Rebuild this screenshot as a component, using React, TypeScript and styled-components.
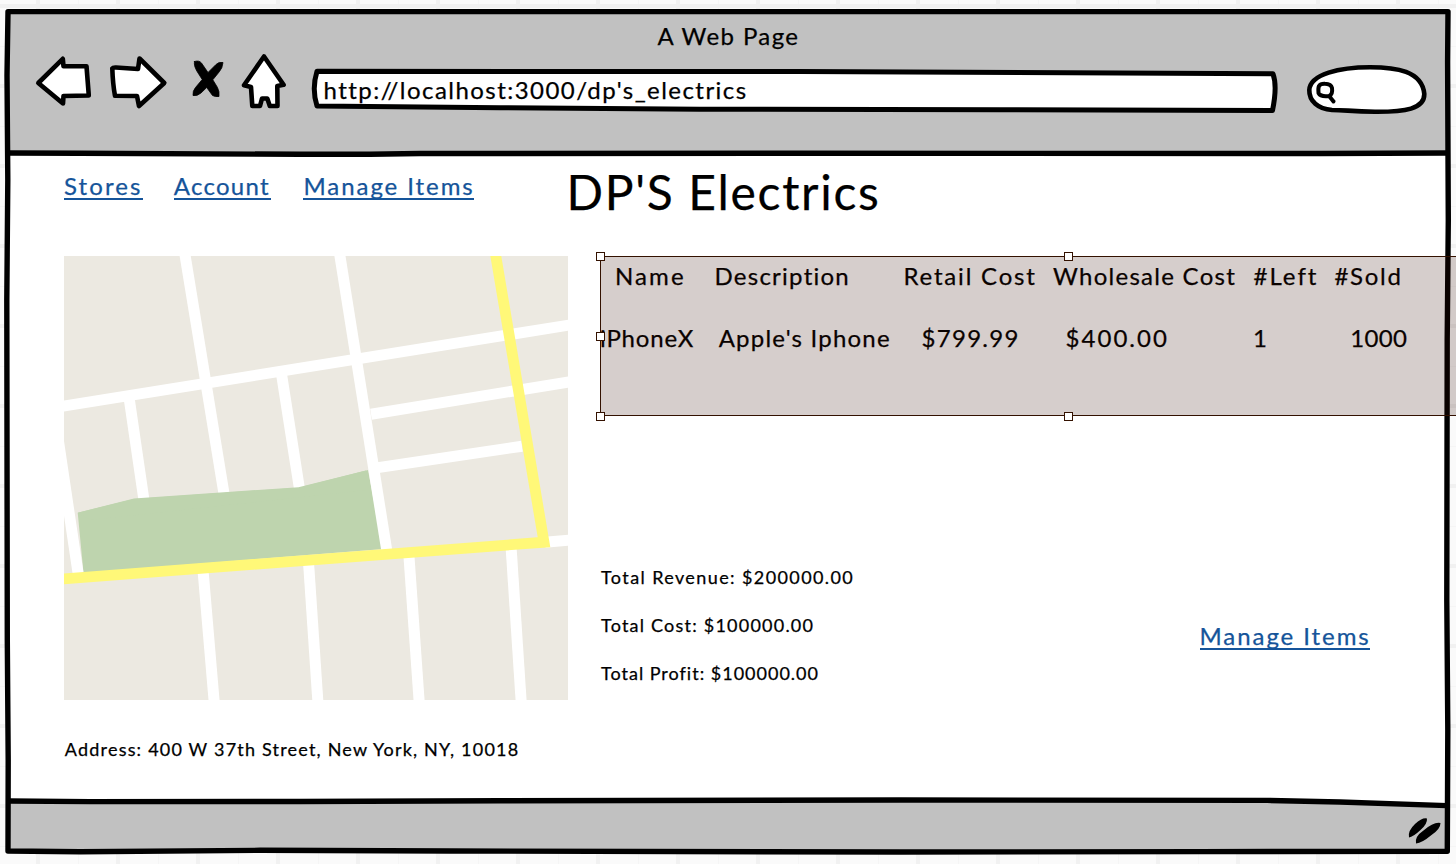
import React from "react";
import styled, { createGlobalStyle } from "styled-components";

const GlobalStyle = createGlobalStyle`
  html, body { margin: 0; overflow: hidden; }
  body {
    font-family: Lato, "Open Sans", sans-serif;
    font-variant-ligatures: none;
    -webkit-text-stroke: 0.25px currentColor;
    color: #000;
  }
`;

const Canvas = styled.div`
  position: relative;
  box-sizing: border-box;
  width: 1456px;
  height: 864px;
  padding: 12px 8px 13px;
  overflow: hidden;
  background-color: #fafafa;
  background-image:
    linear-gradient(#f1f1f1 4px, transparent 4px),
    linear-gradient(90deg, #f1f1f1 4px, transparent 4px),
    linear-gradient(#f5f5f5 1px, transparent 1px),
    linear-gradient(90deg, #f5f5f5 1px, transparent 1px);
  background-size: 80px 80px;
  background-position: 0 4px, 36px 0, 0 46px, 78px 0;
`;

const BrowserWindow = styled.div`
  display: flex;
  flex-direction: column;
  height: 839px;
`;

const Header = styled.header`
  height: 142px;
  background: #c1c1c1;
`;

const Label = styled.span<{ $track?: number; $size?: number }>`
  display: block;
  font-size: ${(p) => p.$size ?? 24}px;
  line-height: ${(p) => (p.$size === 18 ? 24 : p.$size === 48 ? 58 : 30)}px;
  letter-spacing: ${(p) => p.$track ?? 1.4}px;
  white-space: nowrap;
`;

const WindowTitle = styled.div`
  box-sizing: border-box;
  height: 40px;
  padding: 9px 0 0 649.5px;
`;

const Toolbar = styled.div`
  display: flex;
  padding-left: 24px;
`;

const Icon = styled.svg<{ $gap?: number }>`
  display: block;
  flex: none;
  height: 66px;
  margin-right: ${(p) => p.$gap ?? 0}px;
  fill: #fff;
  stroke: #000;
  stroke-width: 4.6;
  stroke-linejoin: round;
  stroke-linecap: round;
`;

const AddressBar = styled.div`
  position: relative;
  width: 972px;
  height: 66px;
  margin-right: 24px;
`;

const BarOutline = styled(Icon)`
  position: absolute;
  inset: 0;
  stroke-width: 5;
`;

const Url = styled.div`
  position: relative;
  padding: 23px 0 0 15.5px;
`;

const Body = styled.main`
  flex: 1;
  min-height: 0;
  background: #fff;
`;

const TopRow = styled.div`
  display: flex;
  height: 102px;
  padding-left: 56px;
`;

const Nav = styled.nav`
  display: flex;
  width: 502.5px;
  padding-top: 16px;
`;

const Link = styled.a<{ $width: number; $track: number; $gap?: number }>`
  box-sizing: border-box;
  flex: none;
  width: ${(p) => p.$width}px;
  height: 30px;
  margin-right: ${(p) => p.$gap ?? 0}px;
  border-bottom: 2px solid #15549a;
  color: #15549a;
  font-size: 24px;
  line-height: 32px;
  letter-spacing: ${(p) => p.$track}px;
  white-space: nowrap;
`;

const Title = styled.h1`
  margin: 9px 0 0;
  font-weight: 400;
`;

const Columns = styled.div`
  display: flex;
  gap: 32px;
  padding-left: 56px;
`;

const StoreColumn = styled.section`
  flex: none;
  width: 504px;
`;

const StoreMap = styled.svg`
  display: block;
  width: 504px;
  height: 444px;
  background: #ece9e1;
`;

const Address = styled.div`
  padding: 37px 0 0 0.8px;
`;

const DetailColumn = styled.section`
  flex: none;
  width: 937px;
`;

const ItemTable = styled.div`
  position: relative;
  height: 160px;
`;

const TableRow = styled.div<{ $top: number; $indent: number }>`
  display: flex;
  padding: ${(p) => p.$top}px 0 0 ${(p) => p.$indent}px;
`;

const Cell = styled(Label)<{ $width: number }>`
  flex: none;
  width: ${(p) => p.$width}px;
`;

const Selection = styled.div`
  position: absolute;
  z-index: 2;
  inset: 0;
  box-sizing: border-box;
  border: 1px solid #331100;
  background: rgba(50, 8, 2, 0.2);
`;

const Handle = styled.i<{ $x: string; $y: string }>`
  position: absolute;
  left: ${(p) => p.$x};
  top: ${(p) => p.$y};
  box-sizing: border-box;
  width: 9px;
  height: 9px;
  margin: -5px 0 0 -5px;
  border: 1px solid #331100;
  background: #fff;
`;

const Summary = styled.div`
  display: flex;
  padding: 149px 0 0 1px;
`;

const Totals = styled.div`
  display: flex;
  flex-direction: column;
  gap: 24px;
  width: 598.5px;
`;

const ManageLink = styled.div`
  display: flex;
  padding-top: 55px;
`;

const Footer = styled.footer`
  height: 50px;
  background: #c1c1c1;
`;

const Frame = styled.svg`
  position: absolute;
  z-index: 1;
  inset: 0;
  pointer-events: none;
`;

const headings: [string, number, number][] = [
  ["Name", 99.5, 2.1],
  ["Description", 189, 1.25],
  ["Retail Cost", 149.5, 1.8],
  ["Wholesale Cost", 200.5, 1.27],
  ["#Left", 81, 2],
  ["#Sold", 80, 1.7],
];

const values: [string, number, number][] = [
  ["iPhoneX", 118.7, 0.85],
  ["Apple's Iphone", 202.8, 1.2],
  ["$799.99", 144, 1.3],
  ["$400.00", 187.5, 2.05],
  ["1", 97.2, 0],
  ["1000", 80, 0.35],
];

const streets = [
  "M184.2 250L223.9 493",
  "M339 250L386.7 550",
  "M60 406.6L572 324.6",
  "M128.8 396L143.8 499",
  "M281.5 374L299.5 489",
  "M371 414.3L572 381.4",
  "M378 467.6L522 446.2",
  "M58.3 440L78.2 574",
  "M545 542.3L570 540",
  "M203 570L214.2 702",
  "M308.5 562L317.9 702",
  "M408.8 554L419.2 702",
  "M511 546L521.2 702",
];

export default function App() {
  return (
    <>
      <GlobalStyle />
      <Canvas>
        <BrowserWindow>
          <Header>
            <WindowTitle>
              <Label $track={1.4}>A Web Page</Label>
            </WindowTitle>
            <Toolbar>
              <Icon $gap={12} width="62" viewBox="32 52 62 66">
                <path d="M38.3 83L62.8 58.8L63.5 66.3L86.5 66.3L88.8 95.5L63.5 96L63 103.5Z" />
              </Icon>
              <Icon $gap={18} width="64" viewBox="106 52 64 66">
                <path d="M112.3 68.5Q113 67.3 116 67.5L138 69L139.5 58.5L164.3 83L139 106L137 96L115 95.8Q112.8 84 112.3 68.5Z" />
              </Icon>
              <Icon $gap={14} width="38" viewBox="188 52 38 66">
                <path
                  d="M194.5 61.5Q199 60 201.5 63L208 72.5L216 64.5Q219 61.5 223 62.5Q222.5 68 219.5 71.5L212.8 79.8L217.5 87.5Q219.5 91 219 96.5Q215 97 212.5 95.5L206.7 87.5L201 93Q197 96.5 193 95.5Q192.5 91 195.5 87.5L202.2 79.5L196.8 71Q193.5 65 194.5 61.5Z"
                  fill="#000"
                  strokeWidth="0.8"
                />
              </Icon>
              <Icon $gap={20} width="48" viewBox="240 52 48 66">
                <path d="M264 56.5L283.6 84.8L277.3 86L277.5 106L269.8 106L267.3 98.5H262L260 106L252.3 106L251 87L244 85.3Z" />
              </Icon>
              <AddressBar>
                <BarOutline width="972" viewBox="308 52 972 66">
                  <path d="M317 71.3L800 71.5L1273 73.8Q1277.5 86 1272.5 110.5L1000 109.8L700 109.2L500 107.7L317 106Q311.5 89 317 71.3Z" />
                </BarOutline>
                <Url>
                  <Label $track={1.45}>http://localhost:3000/dp's_electrics</Label>
                </Url>
              </AddressBar>
              <Icon width="126" viewBox="1304 52 126 66">
                <path d="M1309.3 90C1310 74 1340 67.2 1370 67.2C1396 67.2 1422 71 1424.3 94C1424.5 109 1405 112 1375 111.8C1350 111.3 1345 110 1332 110C1318 109 1309 101 1309.3 90Z" />
                <path d="M1319 86Q1320.5 83.5 1325 83.7Q1331 83.8 1332 88Q1333 94.5 1329 96Q1320.5 97 1318.5 93Q1318 88 1319 86Z" strokeWidth="4" />
                <path d="M1329.5 96.5L1333.5 101.5" strokeWidth="4" />
              </Icon>
            </Toolbar>
          </Header>

          <Body>
            <TopRow>
              <Nav>
                <Link $width={78.5} $track={2.1} $gap={31.2}>Stores</Link>
                <Link $width={97.3} $track={1.27} $gap={32.5}>Account</Link>
                <Link $width={170.5} $track={1.93}>Manage Items</Link>
              </Nav>
              <Title>
                <Label as="span" $size={48} $track={1.68}>DP'S Electrics</Label>
              </Title>
            </TopRow>
            <Columns>
              <StoreColumn>
                <StoreMap viewBox="64 256 504 444">
                  <path d="M77.7 512.7L134 499L298.5 487.7L368 470L383 549L83.5 573Z" fill="#bed4ae" />
                  <g stroke="#fff" strokeWidth="11" fill="none">
                    {streets.map((d) => (
                      <path key={d} d={d} />
                    ))}
                  </g>
                  {/* park edge, in front of the side streets that end at it */}
                  <path d="M77.7 512.7L134 498.5L298.5 487.2L366 470.5L366 490L90 520Z" fill="#bed4ae" />
                  <path d="M494.8 250L544 542.2L60 579.1" stroke="#fff878" strokeWidth="10.8" fill="none" />
                </StoreMap>
                <Address>
                  <Label $size={18} $track={1.2}>Address: 400 W 37th Street, New York, NY, 10018</Label>
                </Address>
              </StoreColumn>

              <DetailColumn>
                <ItemTable>
                  <TableRow $top={4.5} $indent={15}>
                    {headings.map(([text, width, track]) => (
                      <Cell key={text} $width={width} $track={track}>{text}</Cell>
                    ))}
                  </TableRow>
                  <TableRow $top={32} $indent={0}>
                    {values.map(([text, width, track]) => (
                      <Cell key={text} $width={width} $track={track}>{text}</Cell>
                    ))}
                  </TableRow>
                  <Selection>
                    <Handle $x="0" $y="0" />
                    <Handle $x="50%" $y="0" />
                    <Handle $x="0" $y="calc(50% + 1px)" />
                    <Handle $x="0" $y="calc(100% + 2px)" />
                    <Handle $x="50%" $y="calc(100% + 2px)" />
                  </Selection>
                </ItemTable>
                <Summary>
                  <Totals>
                    <Label $size={18} $track={1.4}>Total Revenue: $200000.00</Label>
                    <Label $size={18} $track={1.22}>Total Cost: $100000.00</Label>
                    <Label $size={18} $track={1}>Total Profit: $100000.00</Label>
                  </Totals>
                  <ManageLink>
                    <Link $width={170.5} $track={1.93}>Manage Items</Link>
                  </ManageLink>
                </Summary>
              </DetailColumn>
            </Columns>
          </Body>
          <Footer />
        </BrowserWindow>

        <Frame width="1456" height="864" viewBox="0 0 1456 864">
          <path d="M1180 801L1300 801L1448 805L1448 800L1180 799Z" fill="#fff" />
          <g fill="none" stroke="#000" strokeWidth="5.4" strokeLinejoin="round" strokeLinecap="round">
            <path d="M8 11.6L1448 11.6L1447.6 62L1448.3 220L1447.2 340L1446.8 600L1447.8 730L1447.3 851.3L1200 851.6L900 852L450 851L260 850.3L80 851.7L8 851L8.2 760L7.3 640L6.8 300L7.8 180L7 75Z" />
            <path d="M9 153L80 153.2L300 154.3L370 154.2L420 153.5L800 153.3L1320 153.5L1447 153" />
            <path d="M9 801L90 801.6L300 801.5L500 800.8L900 800L1267 800.4L1340 802L1447 805.6" />
          </g>
          <path d="M1409 837.5Q1407.5 831 1415 824Q1422 817.5 1427 818.5Q1427.5 824 1420.5 830Q1413 837 1409 837.5Z" />
          <path d="M1416 843.5Q1414.5 836.5 1423.5 830.5Q1434 821.5 1440.5 823Q1440.5 829 1431.5 835Q1422 843 1416 843.5Z" />
        </Frame>
      </Canvas>
    </>
  );
}
